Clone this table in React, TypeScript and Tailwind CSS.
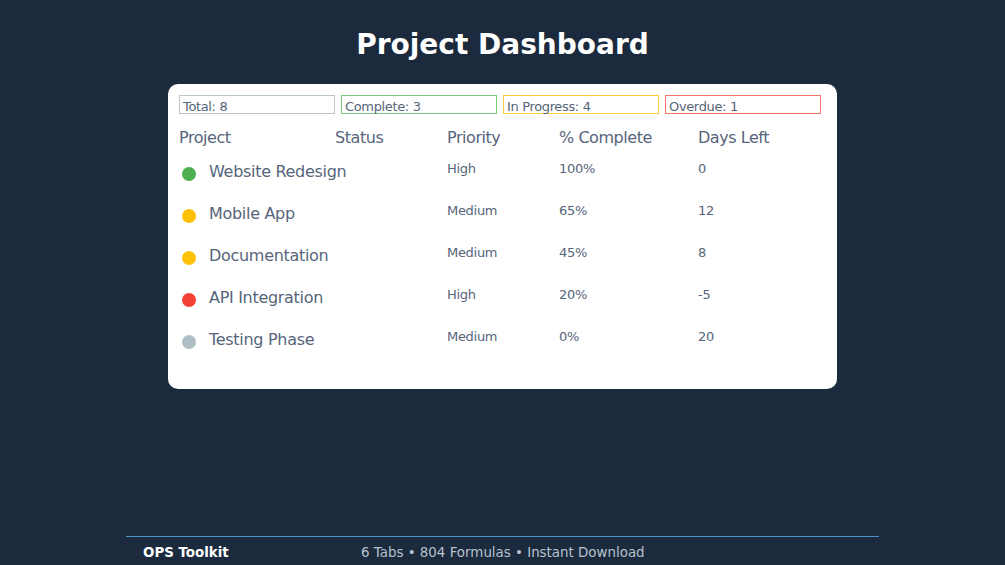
const stats = [
  { label: 'Total: 8', border: 'border-[#b9c6cc]' },
  { label: 'Complete: 3', border: 'border-[#7cc87f]' },
  { label: 'In Progress: 4', border: 'border-[#ffcd3c]' },
  { label: 'Overdue: 1', border: 'border-[#f6766c]' },
];

const projects = [
  { name: 'Website Redesign', dot: 'bg-[#4caf50]', priority: 'High', pct: '100%', days: '0' },
  { name: 'Mobile App', dot: 'bg-[#ffc107]', priority: 'Medium', pct: '65%', days: '12' },
  { name: 'Documentation', dot: 'bg-[#ffc107]', priority: 'Medium', pct: '45%', days: '8' },
  { name: 'API Integration', dot: 'bg-[#f44336]', priority: 'High', pct: '20%', days: '-5' },
  { name: 'Testing Phase', dot: 'bg-[#b0bec5]', priority: 'Medium', pct: '0%', days: '20' },
];

const cols = 'grid grid-cols-[156px_112px_112px_139px_1fr]';

export default function App() {
  return (
    <div className="flex h-[565px] w-full flex-col items-center overflow-hidden bg-[#1c2a3e] font-['DejaVu_Sans',sans-serif]">
      <h1 className="pt-[29px] text-[28px] leading-[32px] font-bold text-white">Project Dashboard</h1>

      <div className="mt-[23px] h-[306px] w-[669px] rounded-[10px] bg-white pt-[11px] pl-[11px] text-[#56657a]">
        {/* summary boxes */}
        <div className="flex gap-[6px]">
          {stats.map((s) => (
            <div
              key={s.label}
              className={`h-[19px] w-[156px] border ${s.border} pt-[4px] pl-[3px] text-[13px] leading-[13px] tracking-[-0.35px]`}
            >
              {s.label}
            </div>
          ))}
        </div>

        <div className={`${cols} mt-[14px] text-[16px] leading-[19px] tracking-[-0.45px]`}>
          <div>Project</div>
          <div>Status</div>
          <div>Priority</div>
          <div>% Complete</div>
          <div>Days Left</div>
        </div>

        <div className="mt-[6px]">
          {projects.map((p) => (
            <div key={p.name} className={`${cols} h-[42px] items-start pt-[8px]`}>
              <div className="col-span-2 flex items-start">
                <span className={`mt-[6px] ml-[3px] size-[14px] shrink-0 rounded-full ${p.dot}`} />
                <span className="mt-[1px] ml-[13px] text-[16px] leading-[19px] tracking-[-0.3px]">{p.name}</span>
              </div>
              <div className="text-[13px] leading-[15px] tracking-[-0.3px]">{p.priority}</div>
              <div className="text-[13px] leading-[15px] tracking-[-0.3px]">{p.pct}</div>
              <div className="text-[13px] leading-[15px] tracking-[-0.3px]">{p.days}</div>
            </div>
          ))}
        </div>
      </div>

      <footer className="mt-[147px] grid h-[29px] w-[753px] shrink-0 grid-cols-[218px_1fr] border-t border-[#4f94c4] pt-[8px] pl-[17px] text-[13.4px] leading-[15px]">
        <span className="font-bold text-white">OPS Toolkit</span>
        <span className="text-[#b7c2cc]">6 Tabs • 804 Formulas • Instant Download</span>
      </footer>
    </div>
  );
}
